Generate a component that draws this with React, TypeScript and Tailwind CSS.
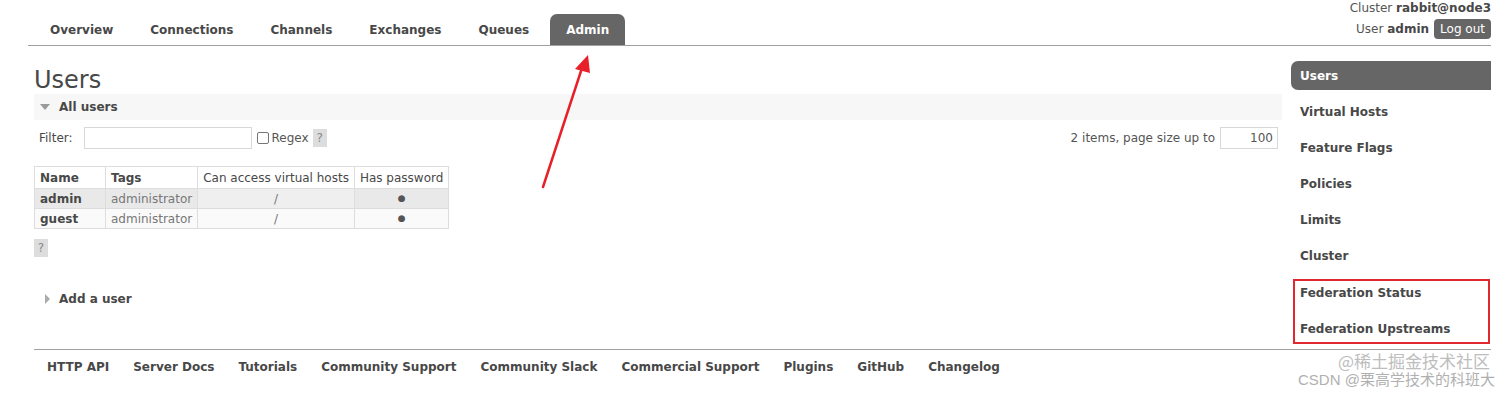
import React from "react";

const tabs = ["Overview", "Connections", "Channels", "Exchanges", "Queues", "Admin"];
const side = ["Users", "Virtual Hosts", "Feature Flags", "Policies", "Limits", "Cluster"];
const footer = [
  "HTTP API",
  "Server Docs",
  "Tutorials",
  "Community Support",
  "Community Slack",
  "Commercial Support",
  "Plugins",
  "GitHub",
  "Changelog",
];

function Help({ cls = "" }: { cls?: string }) {
  return (
    <span
      className={
        "inline-flex h-[18px] w-[14px] items-center justify-center bg-[#dddddd] text-[12px] leading-none text-[#888] " +
        cls
      }
    >
      ?
    </span>
  );
}

export default function App() {
  return (
    <div
      className="relative h-[397px] w-[1512px] overflow-hidden bg-white text-[12px] text-[#484848]"
      style={{ fontFamily: '"DejaVu Sans", Verdana, sans-serif' }}
    >
      {/* Header */}
      <div className="ml-[28px] mr-[21px] flex h-[46px] items-end justify-between border-b border-[#a0a0a0]">
        <div className="flex gap-[5px] pl-[6px]">
          {tabs.map((t) =>
            t === "Admin" ? (
              <div
                key={t}
                className="flex h-[31px] items-center rounded-t-[7px] bg-[#666666] px-4 pt-[1px] font-bold text-white"
              >
                {t}
              </div>
            ) : (
              <div key={t} className="flex h-[31px] items-center px-4 pt-[1px] font-bold text-[#484848]">
                {t}
              </div>
            )
          )}
        </div>
        <div className="flex flex-col items-end self-start pt-[1px] text-[#555]">
          <div className="h-[16px] leading-[14px]">
            Cluster <b className="text-[#484848]">rabbit@node3</b>
          </div>
          <div className="mt-[2px] flex items-center gap-[5px]">
            <span>
              User <b className="text-[#484848]">admin</b>
            </span>
            <span className="flex h-[20px] items-center rounded-[4px] bg-[#666666] px-[6px] text-white">Log out</span>
          </div>
        </div>
      </div>

      {/* Body */}
      <div className="flex">
        <div className="ml-[34px] w-[1248px]">
          <h1 className="mt-[20px] h-[28px] text-[24px] font-normal leading-[28px] text-[#484848]">Users</h1>
          <div className="flex h-[26px] items-center bg-[#f7f7f7]">
            <svg width="10" height="6" viewBox="0 0 10 6" className="ml-[6px]">
              <polygon points="0,0 10,0 5,6" fill="#9a9a9a" />
            </svg>
            <span className="ml-[9px] font-bold">All users</span>
          </div>

          <div className="mt-[7px] flex h-[22px] items-center justify-between">
            <div className="flex items-center pl-[5px]">
              <span>Filter:</span>
              <div className="ml-[11px] h-[22px] w-[168px] border border-[#d8d8d8] bg-white" />
              <span className="ml-[5px] h-[12px] w-[12px] rounded-[2px] border border-[#767676] bg-white" />
              <span className="ml-[3px] text-[#555]">Regex</span>
              <Help cls="ml-[4px]" />
            </div>
            <div className="mr-[4px] flex items-center text-[#555]">
              <span>2 items, page size up to</span>
              <div className="ml-[5px] flex h-[22px] w-[58px] items-center justify-end border border-[#d8d8d8] bg-white pr-[4px]">
                100
              </div>
            </div>
          </div>

          <table className="mt-[17px] border-collapse whitespace-nowrap border border-[#dddddd] text-[12px]">
            <thead>
              <tr className="h-[22px] bg-white">
                <th className="w-[71px] border border-[#dddddd] px-[5px] text-left font-bold">Name</th>
                <th className="w-[92px] border border-[#dddddd] px-[5px] text-left font-bold">Tags</th>
                <th className="border border-[#dddddd] px-[5px] text-left font-normal">Can access virtual hosts</th>
                <th className="border border-[#dddddd] px-[5px] text-left font-normal">Has password</th>
              </tr>
            </thead>
            <tbody>
              <tr className="h-[20px] bg-[#e9e9e9]">
                <td className="border border-[#dddddd] px-[5px] font-bold">admin</td>
                <td className="border border-[#dddddd] px-[5px] text-[#777]">administrator</td>
                <td className="border border-[#dddddd] bg-[#efefef] text-center text-[#777]">/</td>
                <td className="border border-[#dddddd] text-center text-[9px] text-[#555]">●</td>
              </tr>
              <tr className="h-[20px] bg-[#fafafa]">
                <td className="border border-[#dddddd] px-[5px] font-bold">guest</td>
                <td className="border border-[#dddddd] px-[5px] text-[#777]">administrator</td>
                <td className="border border-[#dddddd] text-center text-[#777]">/</td>
                <td className="border border-[#dddddd] text-center text-[9px] text-[#555]">●</td>
              </tr>
            </tbody>
          </table>

          <Help cls="mt-[10px]" />

          <div className="mt-[33px] flex items-center">
            <svg width="5" height="10" viewBox="0 0 5 10" className="ml-[11px]">
              <polygon points="0,0 5,5 0,10" fill="#aaaaaa" />
            </svg>
            <span className="ml-[9px] font-bold">Add a user</span>
          </div>
        </div>

        {/* Sidebar */}
        <div className="ml-[9px] mt-[15px] w-[200px] font-bold">
          {side.map((s, i) =>
            i === 0 ? (
              <div
                key={s}
                className="mb-[7px] flex h-[29px] items-center rounded-l-[7px] bg-[#666666] pl-[9px] text-white"
              >
                {s}
              </div>
            ) : (
              <div key={s} className={"flex h-[29px] items-center pl-[9px] " + (i === 5 ? "mb-[9px]" : "mb-[7px]")}>
                {s}
              </div>
            )
          )}
          <div className="ml-[2px] mr-[1px] border-2 border-[#e0282e] pb-[3px] pl-[5px] pt-[2px]">
            <div className="flex h-[20px] items-center">Federation Status</div>
            <div className="mt-[16px] flex h-[20px] items-center">Federation Upstreams</div>
          </div>
        </div>
      </div>

      {/* Footer */}
      <div className="ml-[34px] mr-[21px] mt-[5px] flex gap-[24px] border-t border-[#a0a0a0] pl-[13px] pt-[8px] font-bold">
        {footer.map((f) => (
          <span key={f}>{f}</span>
        ))}
      </div>

      {/* Annotation arrow */}
      <svg className="pointer-events-none absolute left-0 top-0" width="1512" height="397">
        <line x1="543" y1="187" x2="582" y2="68" stroke="#e8202a" strokeWidth="2.5" strokeLinecap="round" />
        <polygon points="588,55 590,73 575,69" fill="#e8202a" />
      </svg>

      {/* Watermark */}
      <div
        className="pointer-events-none absolute left-[1338px] top-[350px] whitespace-nowrap text-[17px] leading-[22px] text-[#bdbdbd]"
        style={{ fontFamily: '"Noto Sans CJK SC", sans-serif' }}
      >
        @稀土掘金技术社区
      </div>
      <div
        className="pointer-events-none absolute left-[1298px] top-[370px] whitespace-nowrap text-[15px] leading-[20px] text-[#b0b0b0]"
        style={{ fontFamily: '"Liberation Sans", "Noto Sans CJK SC", sans-serif' }}
      >
        CSDN @栗高学技术的科班大
      </div>
    </div>
  );
}
